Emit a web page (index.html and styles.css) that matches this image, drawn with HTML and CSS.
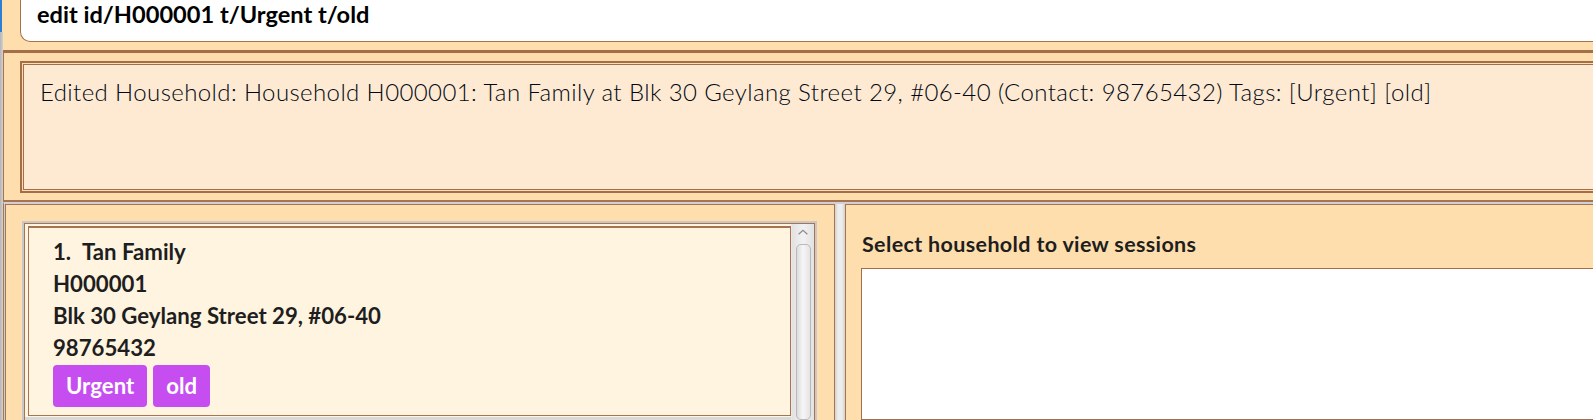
FILE: index.html
```html
<!DOCTYPE html>
<html>
<head>
<meta charset="utf-8">
<link rel="stylesheet" href="styles.css">
</head>
<body>
<div class="window">
  <div class="edge"><div class="edge-blue"></div></div>
  <div class="main">
    <div class="cmd-row">
      <div class="cmd-box">edit id/H000001 t/Urgent t/old</div>
    </div>
    <div class="result-pane">
      <div class="result-outer">
        <div class="result-box">Edited Household: Household H000001: Tan Family at Blk 30 Geylang Street 29, #06-40 (Contact: 98765432) Tags: [Urgent] [old]</div>
      </div>
    </div>
    <div class="lower">
      <div class="left-panel">
        <div class="list-view">
          <div class="list-inner">
            <div class="cells">
              <div class="cell">
                <div class="card">
                  <div class="line"><span class="idx">1.</span>Tan Family</div>
                  <div class="line">H000001</div>
                  <div class="line">Blk 30 Geylang Street 29, #06-40</div>
                  <div class="line">98765432</div>
                  <div class="tags"><span class="tag">Urgent</span><span class="tag">old</span></div>
                </div>
              </div>
            </div>
            <div class="scrollbar">
              <svg class="arrow" width="12" height="7" viewBox="0 0 12 7"><path d="M1 6 L6 1.5 L11 6" fill="none" stroke="#8a8a8a" stroke-width="1.3"/></svg>
              <div class="thumb"></div>
            </div>
          </div>
        </div>
      </div>
      <div class="divider"></div>
      <div class="right-panel">
        <div class="sessions-title">Select household to view sessions</div>
        <div class="sessions-box"></div>
      </div>
    </div>
  </div>
</div>
</body>
</html>
```
FILE: styles.css
```css
html, body {
  margin: 0;
  padding: 0;
  overflow: hidden;
  width: 1593px;
  height: 420px;
  background: #ffdead;
}
.window {
  display: flex;
  width: 1640px;
  height: 420px;
  overflow: hidden;
  background: #ffdead;
  font-family: Lato, "Open Sans", sans-serif;
}
.edge {
  width: 3px;
  flex: none;
  background: linear-gradient(to right, #b4b4b4, #d2d2d2);
}
.edge-blue {
  height: 32px;
  width: 3px;
  background: linear-gradient(to right, #2d7fd6 0, #2d7fd6 2px, #ffdead 2px);
}
.main {
  flex: 1;
  display: flex;
  flex-direction: column;
  min-height: 0;
}
.cmd-row {
  flex: none;
  height: 50px;
  padding-left: 17px;
  box-sizing: border-box;
}
.cmd-box {
  height: 42px;
  box-sizing: border-box;
  background: #fff;
  border-left: 1px solid #a8714c;
  border-bottom: 1px solid #a8714c;
  border-bottom-left-radius: 10px;
  padding-left: 16px;
  font-weight: 700;
  font-size: 23.6px;
  line-height: 26px;
  padding-top: 1px;
  color: #000;
}
.result-pane {
  flex: none;
  height: 152px;
  box-sizing: border-box;
  border-top: 3px solid #a56e4a;
  border-left: 1px solid #a87350;
  border-bottom: 2px solid #a87350;
  padding: 8px 0 0 16px;
}
.result-outer {
  height: 132px;
  box-sizing: border-box;
  border: 2px solid #a56e4a;
  padding: 1px;
  background: #ffdead;
}
.result-box {
  height: 100%;
  box-sizing: border-box;
  border: 1px solid #a56e4a;
  background: #feead2;
  padding: 12px 0 0 16px;
  font-weight: 300;
  font-size: 24px;
  letter-spacing: 0.4px;
  line-height: 30px;
  color: #000814;
  white-space: nowrap;
}
.lower {
  flex: 1;
  min-height: 0;
  overflow: hidden;
  display: flex;
  border-top: 2px solid #d2d0d4;
  border-left: 1px solid #a87350;
  padding-left: 1px;
  background: #cfcfcf;
}
.left-panel {
  width: 830px;
  flex: none;
  box-sizing: border-box;
  background: #ffdead;
  border-top: 1px solid #a87350;
  border-left: 1px solid #a87350;
  border-right: 1px solid #a87350;
  padding: 16px 17px 0 16px;
}
.list-view {
  height: 100%;
  box-sizing: border-box;
  border: 2px solid #c8c8c8;
  border-bottom: none;
}
.list-inner {
  height: 100%;
  box-sizing: border-box;
  border: 1px solid #a87350;
  border-bottom: none;
  display: flex;
  background: #d9d9d9;
}
.cells {
  flex: 1;
}
.cell {
  background: #fff4e0;
  padding: 2px 0 1px 3px;
}
.card {
  border: 1px solid #a87350;
  border-top-width: 2px;
  background: #fff4e0;
  padding: 8px 0 8px 24px;
  color: #1e1e1e;
  font-weight: 700;
  font-size: 22.2px;
  line-height: 32px;
}
.idx {
  display: inline-block;
  width: 29px;
}
.tags {
  display: flex;
  gap: 6px;
  padding-top: 1px;
}
.tag {
  background: #c64ef1;
  color: #fff;
  border-radius: 4px;
  height: 42px;
  line-height: 42px;
  padding: 0 13px;
  box-sizing: border-box;
}
.scrollbar {
  width: 23px;
  flex: none;
  background: linear-gradient(to right, #e2e2e2, #f1f1f1 50%, #e2e2e2);
  border-left: 1px solid #e8e8e8;
  box-sizing: border-box;
  display: flex;
  flex-direction: column;
  align-items: center;
  padding-top: 5px;
}
.arrow {
  display: block;
}
.thumb {
  margin-top: 9px;
  width: 15px;
  height: 200px;
  box-sizing: border-box;
  border: 1px solid #b9b9b9;
  border-radius: 5px;
  background: linear-gradient(to right, #dcdcdc, #f6f6f6 45%, #e4e4e4);
}
.divider {
  width: 10px;
  flex: none;
  background: linear-gradient(to right, #d0d0d0, #ededed 30%, #ededed 70%, #cfcfcf);
}
.right-panel {
  flex: 1;
  box-sizing: border-box;
  background: #ffdead;
  border-top: 1px solid #a87350;
  border-left: 1px solid #a87350;
  padding: 23px 0 0 15px;
  display: flex;
  flex-direction: column;
}
.sessions-title {
  font-weight: 700;
  font-size: 21.5px;
  letter-spacing: 0.35px;
  line-height: 32px;
  color: #1e1e1e;
  padding-left: 1px;
}
.sessions-box {
  margin-top: 8px;
  flex: 1;
  background: #fff;
  border: 1px solid #a56e4a;
}
```
